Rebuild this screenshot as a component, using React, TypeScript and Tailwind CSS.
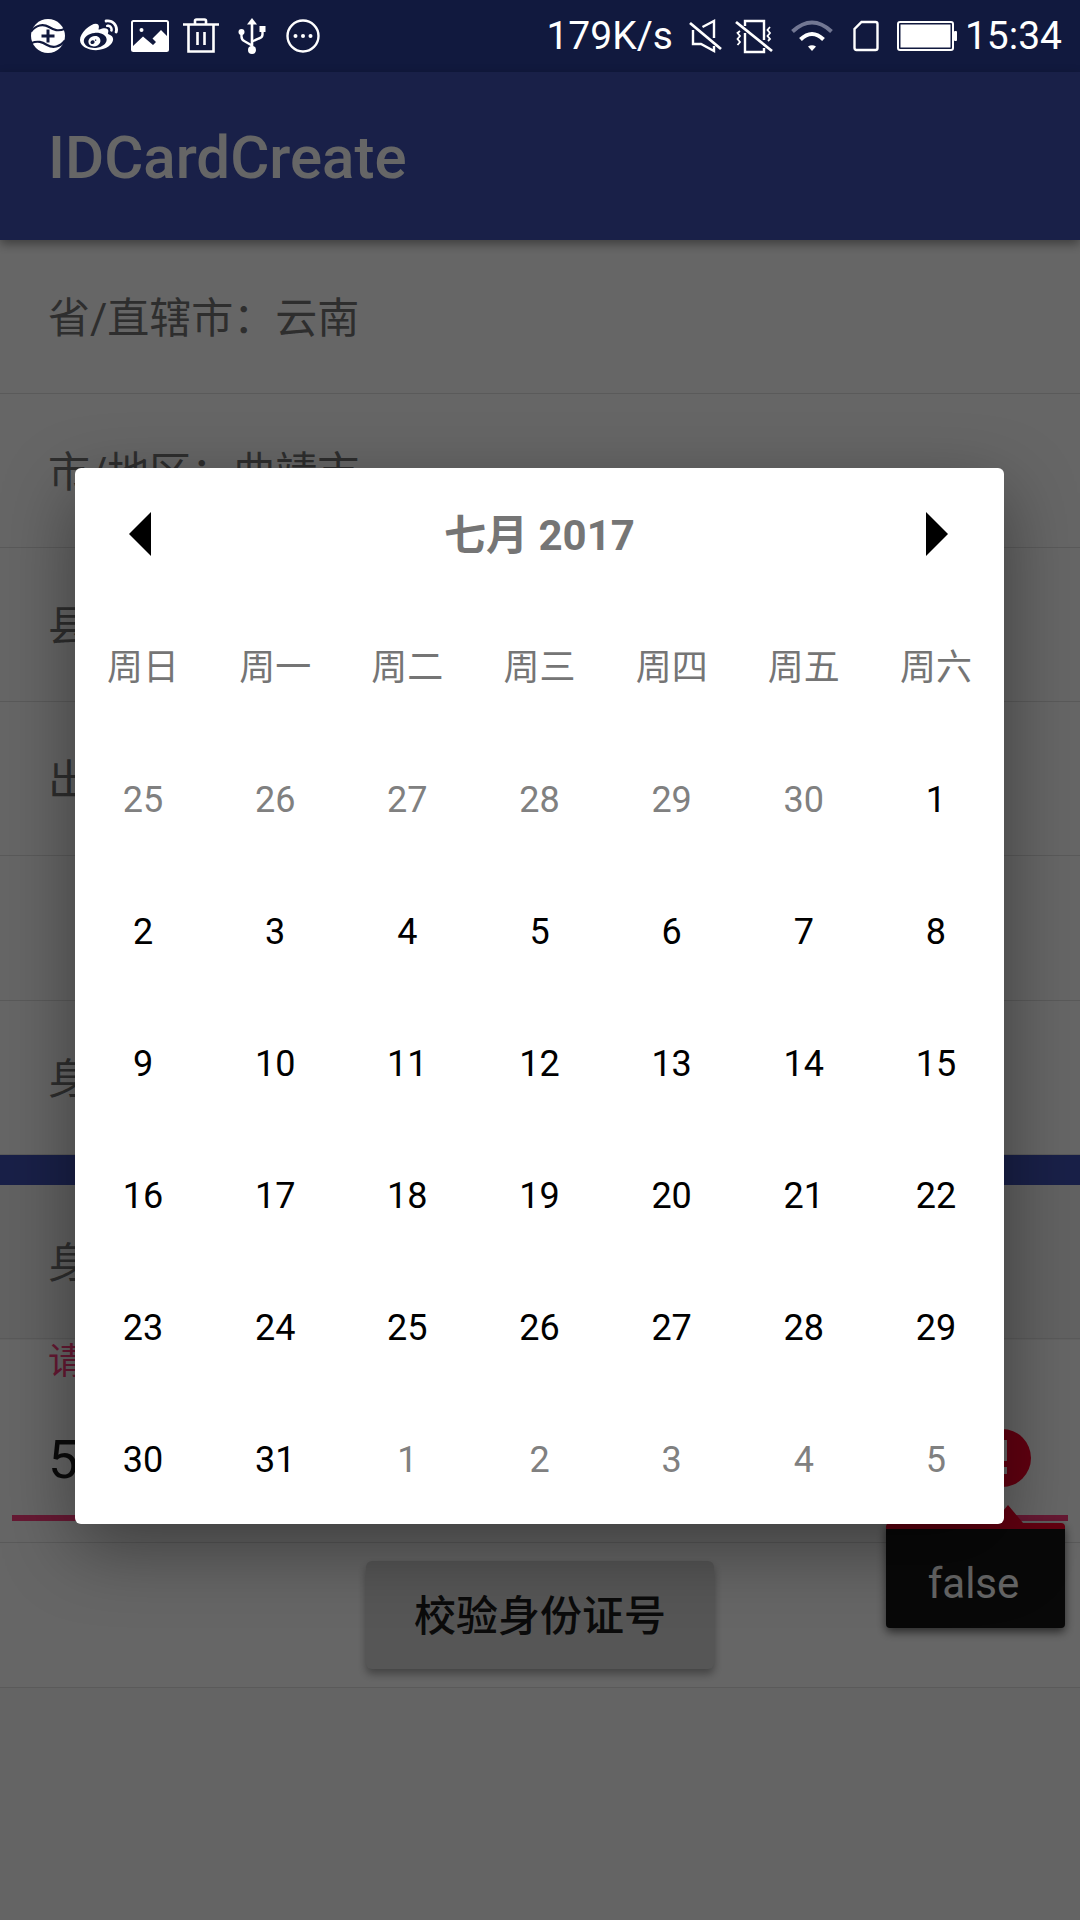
import type { ReactNode } from "react";
import { FaWeibo } from "react-icons/fa";

const weekdays = ["周日", "周一", "周二", "周三", "周四", "周五", "周六"];

const weeks = [
  [25, 26, 27, 28, 29, 30, 1],
  [2, 3, 4, 5, 6, 7, 8],
  [9, 10, 11, 12, 13, 14, 15],
  [16, 17, 18, 19, 20, 21, 22],
  [23, 24, 25, 26, 27, 28, 29],
  [30, 31, 1, 2, 3, 4, 5],
];

function isOtherMonth(week: number, day: number) {
  return (week === 0 && day > 7) || (week === 5 && day < 7);
}

function SwirlIcon() {
  return (
    <svg viewBox="0 0 42 42" className="size-[42px]" fill="none">
      <circle cx="21" cy="21" r="17" fill="#fff" />
      <path d="M4 16.500C9 10 16 8.500 22 12C27 15 31 16.500 37.500 14" stroke="#11193e" strokeWidth="2.200" />
      <path d="M38 25.500C33 32 26 33.500 20 30C15 27 11 25.500 4.500 28" stroke="#11193e" strokeWidth="2.200" />
      <path d="M21 14.500v13M14.500 21h13" stroke="#11193e" strokeWidth="3" />
    </svg>
  );
}

function PictureIcon() {
  return (
    <svg viewBox="0 0 42 42" className="size-[42px]" fill="none">
      <rect x="3" y="6" width="36" height="30" rx="1.500" stroke="#fff" strokeWidth="2" />
      <circle cx="12.500" cy="15" r="2" fill="#fff" />
      <path d="M4 35V31L14 21.500L24 30L27 27L23.500 23.500L32 15L38 21V35Z" fill="#fff" />
    </svg>
  );
}

function TrashIcon() {
  return (
    <svg viewBox="0 0 42 42" className="size-[42px]" fill="none" stroke="#fff">
      <path d="M3 9.500H39" strokeWidth="2.600" />
      <path d="M15 9V6Q15 4.500 16.500 4.500H24.500Q26 4.500 26 6V9" strokeWidth="2.600" />
      <path d="M8.500 10V36.500H33.500V10" strokeWidth="2.600" />
      <path d="M17.500 17V30M24.500 17V30" strokeWidth="2.600" />
    </svg>
  );
}

function UsbIcon() {
  return (
    <svg viewBox="0 0 42 42" className="size-[42px]" fill="none">
      <path d="M21 3L26 9.500H16Z" fill="#fff" />
      <path d="M21 8V35" stroke="#fff" strokeWidth="2.600" />
      <path d="M10.500 17V21.500Q10.500 25 14 26.500L21 30.500" stroke="#fff" strokeWidth="2.400" />
      <path d="M31.500 15V19.500Q31.500 22.500 28 23.500L21 26.500" stroke="#fff" strokeWidth="2.400" />
      <circle cx="10.500" cy="17" r="3" fill="#fff" />
      <rect x="28.500" y="11" width="6" height="6" fill="#fff" />
      <circle cx="21" cy="35" r="4" fill="#fff" />
    </svg>
  );
}

function MoreIcon() {
  return (
    <svg viewBox="0 0 42 42" className="size-[42px]" fill="#fff">
      <circle cx="21" cy="21" r="15.500" fill="none" stroke="#fff" strokeWidth="2.400" />
      <circle cx="13.500" cy="21" r="2" />
      <circle cx="21" cy="21" r="2" />
      <circle cx="28.500" cy="21" r="2" />
    </svg>
  );
}

function MuteIcon() {
  return (
    <svg viewBox="0 0 34 36" className="h-9 w-[34px]" fill="none" stroke="#fff" strokeWidth="2.400">
      <path d="M1 5L32 31" strokeWidth="2.800" />
      <path d="M13.500 9L25 3V20" />
      <path d="M4 12V26H12L25 33V28" />
    </svg>
  );
}

function VibrateOffIcon() {
  return (
    <svg viewBox="0 0 38 36" className="h-9 w-[38px]" fill="none" stroke="#fff" strokeWidth="2.400">
      <path d="M1 4L37 33" strokeWidth="2.800" />
      <path d="M10 8V3H29V22" />
      <path d="M10 15V34H29V30" />
      <path d="M5 13L2.500 15L5 18L2.500 21L5 24L2.500 27" strokeWidth="1.800" />
      <path d="M35 9L32.500 12L35 15L32.500 18L35 21L33 23" strokeWidth="1.800" />
    </svg>
  );
}

function WifiIcon() {
  return (
    <svg viewBox="0 0 42 36" className="h-9 w-[42px]" fill="none">
      <path d="M1.500 13.500Q21 -4.500 40.500 13.500" stroke="#727793" strokeWidth="4" />
      <path d="M9.500 21.500Q21 10.500 32.500 21.500" stroke="#fff" strokeWidth="4" />
      <path d="M17 28.500Q21 26 25 28.500L21 33Z" fill="#fff" />
    </svg>
  );
}

function SimIcon() {
  return (
    <svg viewBox="0 0 26 36" className="h-9 w-[26px]" fill="none">
      <path
        d="M8.500 4H22.500Q24.500 4 24.500 6V30Q24.500 32 22.500 32H3.500Q1.500 32 1.500 30V11Z"
        stroke="#fff"
        strokeWidth="2.400"
      />
    </svg>
  );
}

function BatteryIcon() {
  return (
    <svg viewBox="0 0 60 36" className="h-9 w-[60px]" fill="none">
      <rect x="1" y="4" width="55" height="28" rx="2" stroke="#fff" strokeWidth="2" />
      <rect x="3.500" y="6.500" width="50" height="23" fill="#fff" />
      <rect x="57" y="13" width="3" height="10" rx="1" fill="#fff" />
    </svg>
  );
}

function ListRow({ children }: { children: ReactNode }) {
  return (
    <div className="flex h-[154px] items-center border-b border-[#e0e0e0] px-12 pt-1 text-[42px] leading-[56px] text-[#737373]">
      {children}
    </div>
  );
}

function StatusBar() {
  return (
    <header className="flex h-[72px] shrink-0 items-center justify-between bg-[#11193e] pr-[18px] pl-[27px] text-white">
      <div className="flex items-center gap-[9px]">
        <SwirlIcon />
        <FaWeibo className="size-[42px] p-0.5" />
        <PictureIcon />
        <TrashIcon />
        <UsbIcon />
        <MoreIcon />
      </div>
      <div className="flex items-center">
        <span className="mr-4 text-[39px] leading-[48px]">179K/s</span>
        <MuteIcon />
        <span className="ml-3">
          <VibrateOffIcon />
        </span>
        <span className="ml-[18px]">
          <WifiIcon />
        </span>
        <span className="ml-5">
          <SimIcon />
        </span>
        <span className="ml-[18px]">
          <BatteryIcon />
        </span>
        <span className="ml-2 text-[39px] leading-[48px]">15:34</span>
      </div>
    </header>
  );
}

function Calendar() {
  return (
    <div
      role="dialog"
      aria-label="七月 2017"
      className="mr-[76px] ml-[75px] w-full rounded-md bg-white px-0.5 shadow-[0_24px_72px_rgba(0,0,0,0.4)]"
    >
      <div className="flex h-[132px] items-center justify-between">
        <button type="button" aria-label="上个月" className="flex size-[132px] items-center justify-center">
          <svg viewBox="0 0 28 46" className="h-[46px] w-7">
            <path d="M0 23L22 1V45Z" />
          </svg>
        </button>
        <h2 className="pt-1 text-[42px] leading-[56px] font-bold text-[#757575]">七月 2017</h2>
        <button type="button" aria-label="下个月" className="flex size-[132px] items-center justify-center">
          <svg viewBox="0 0 28 46" className="h-[46px] w-7">
            <path d="M26 23L4 1V45Z" />
          </svg>
        </button>
      </div>
      <table className="w-full table-fixed border-collapse text-[36px] leading-[48px]">
        <thead>
          <tr className="h-[132px]">
            {weekdays.map((name) => (
              <th key={name} scope="col" className="p-0 pt-1 text-center font-normal text-[#757575]">
                {name}
              </th>
            ))}
          </tr>
        </thead>
        <tbody>
          {weeks.map((days, week) => (
            <tr key={week} className="h-[132px]">
              {days.map((day) => (
                <td key={day} className="p-0">
                  <button
                    type="button"
                    className={
                      isOtherMonth(week, day)
                        ? "h-[132px] w-full pt-1 text-center text-[#808080]"
                        : "h-[132px] w-full pt-1 text-center text-black"
                    }
                  >
                    {day}
                  </button>
                </td>
              ))}
            </tr>
          ))}
        </tbody>
      </table>
    </div>
  );
}

function IdField() {
  return (
    <div className="border-b border-[#e0e0e0] px-3 pb-[21px]">
      <div className="relative border-b-[6px] border-[#ff4081] px-9">
        <label htmlFor="id-number" className="block h-10 pt-0.5 text-[36px] leading-10 text-[#ff4081]">
          请
        </label>
        <div className="mt-5 flex h-[115px] items-center">
          <input
            id="id-number"
            defaultValue="5"
            className="min-w-0 flex-1 bg-transparent pt-1 text-[54px] leading-[64px] text-[#1c1c1c] outline-none"
          />
          <svg viewBox="0 0 60 60" className="size-[60px] shrink-0">
            <circle cx="30" cy="30" r="29" fill="#f50028" />
            <path d="M26 12H35V33H26ZM26 39H35V46H26Z" fill="#fff" />
          </svg>
        </div>
        <div
          role="tooltip"
          className="absolute top-full right-[3px] mt-2 w-[179px] rounded-sm border-t-[6px] border-[#f50028] bg-[#151515] pt-[27px] pr-1 pb-4 text-center text-[42px] leading-[56px] text-white shadow-[0_4px_10px_rgba(0,0,0,0.6)]"
        >
          <svg viewBox="0 0 30 18" className="absolute right-[42px] bottom-full mb-[6px] h-[18px] w-[30px]">
            <path d="M15 0L30 18H0Z" fill="#f50028" />
          </svg>
          false
        </div>
      </div>
    </div>
  );
}

export default function App() {
  return (
    <div className="flex min-h-screen flex-col font-['Roboto','Noto_Sans_CJK_SC',sans-serif]">
      <StatusBar />
      <div className="relative flex flex-1 flex-col bg-[#fafafa]">
        <div className="relative flex h-[168px] items-center bg-[#3f51b5] px-12 pt-1 shadow-[0_4px_10px_rgba(0,0,0,0.4)]">
          <h1 className="text-[60px] leading-[72px] font-medium text-white">IDCardCreate</h1>
        </div>
        <main className="bg-white">
          <ListRow>省/直辖市：云南</ListRow>
          <ListRow>市/地区：曲靖市</ListRow>
          <ListRow>县</ListRow>
          <ListRow>出</ListRow>
          <div className="h-[145px] border-b border-[#e0e0e0]" />
          <ListRow>身</ListRow>
          <div className="h-[30px] bg-[#3f51b5]" />
          <div className="bg-[#f5f5f5] pb-px">
            <ListRow>身</ListRow>
          </div>
          <IdField />
          <div className="flex justify-center border-b border-[#e0e0e0] py-[18px]">
            <button
              type="button"
              className="h-[108px] rounded-md bg-[#d6d7d7] px-12 pt-1 text-[42px] leading-[56px] font-medium text-[#1c1c1c] shadow-[0_5px_8px_rgba(0,0,0,0.35)]"
            >
              校验身份证号
            </button>
          </div>
        </main>
        <div className="absolute inset-0 flex items-center justify-center bg-black/60">
          <Calendar />
        </div>
      </div>
    </div>
  );
}
